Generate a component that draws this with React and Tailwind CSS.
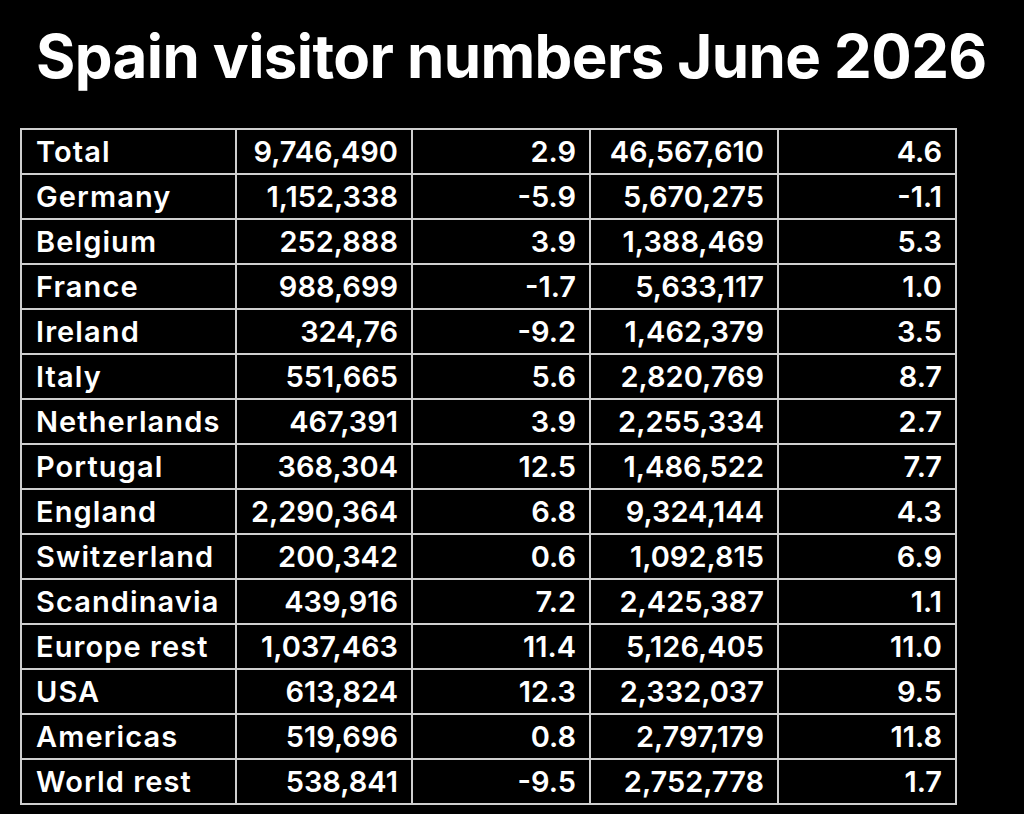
import React from "react";

const rows = [
  ["Total", "9,746,490", "2.9", "46,567,610", "4.6"],
  ["Germany", "1,152,338", "-5.9", "5,670,275", "-1.1"],
  ["Belgium", "252,888", "3.9", "1,388,469", "5.3"],
  ["France", "988,699", "-1.7", "5,633,117", "1.0"],
  ["Ireland", "324,76", "-9.2", "1,462,379", "3.5"],
  ["Italy", "551,665", "5.6", "2,820,769", "8.7"],
  ["Netherlands", "467,391", "3.9", "2,255,334", "2.7"],
  ["Portugal", "368,304", "12.5", "1,486,522", "7.7"],
  ["England", "2,290,364", "6.8", "9,324,144", "4.3"],
  ["Switzerland", "200,342", "0.6", "1,092,815", "6.9"],
  ["Scandinavia", "439,916", "7.2", "2,425,387", "1.1"],
  ["Europe rest", "1,037,463", "11.4", "5,126,405", "11.0"],
  ["USA", "613,824", "12.3", "2,332,037", "9.5"],
  ["Americas", "519,696", "0.8", "2,797,179", "11.8"],
  ["World rest", "538,841", "-9.5", "2,752,778", "1.7"],
];

const widths = ["w-[215px]", "w-[176px]", "w-[178px]", "w-[188px]", "w-[178px]"];

export default function App() {
  return (
    <div className="w-[1024px] h-[814px] bg-black text-white overflow-hidden font-['Inter',sans-serif]">
      <h1 className="pl-[36px] pt-[20px] h-[128px] text-[60px] font-bold leading-[72px] tracking-[-0.6px]">
        Spain visitor numbers June 2026
      </h1>
      <table className="ml-[20px] border-collapse border-2 border-[#cfcfcf] table-fixed">
        <tbody>
          {rows.map((row) => (
            <tr key={row[0]} className="h-[45px]">
              {row.map((cell, i) => (
                <td
                  key={i}
                  className={`${widths[i]} border-2 border-[#cfcfcf] text-[29px] font-semibold leading-none ${
                    i === 0 ? "text-left pl-[14px] tracking-[1.1px]" : "text-right pr-[13px]"
                  }`}
                >
                  {cell}
                </td>
              ))}
            </tr>
          ))}
        </tbody>
      </table>
    </div>
  );
}
